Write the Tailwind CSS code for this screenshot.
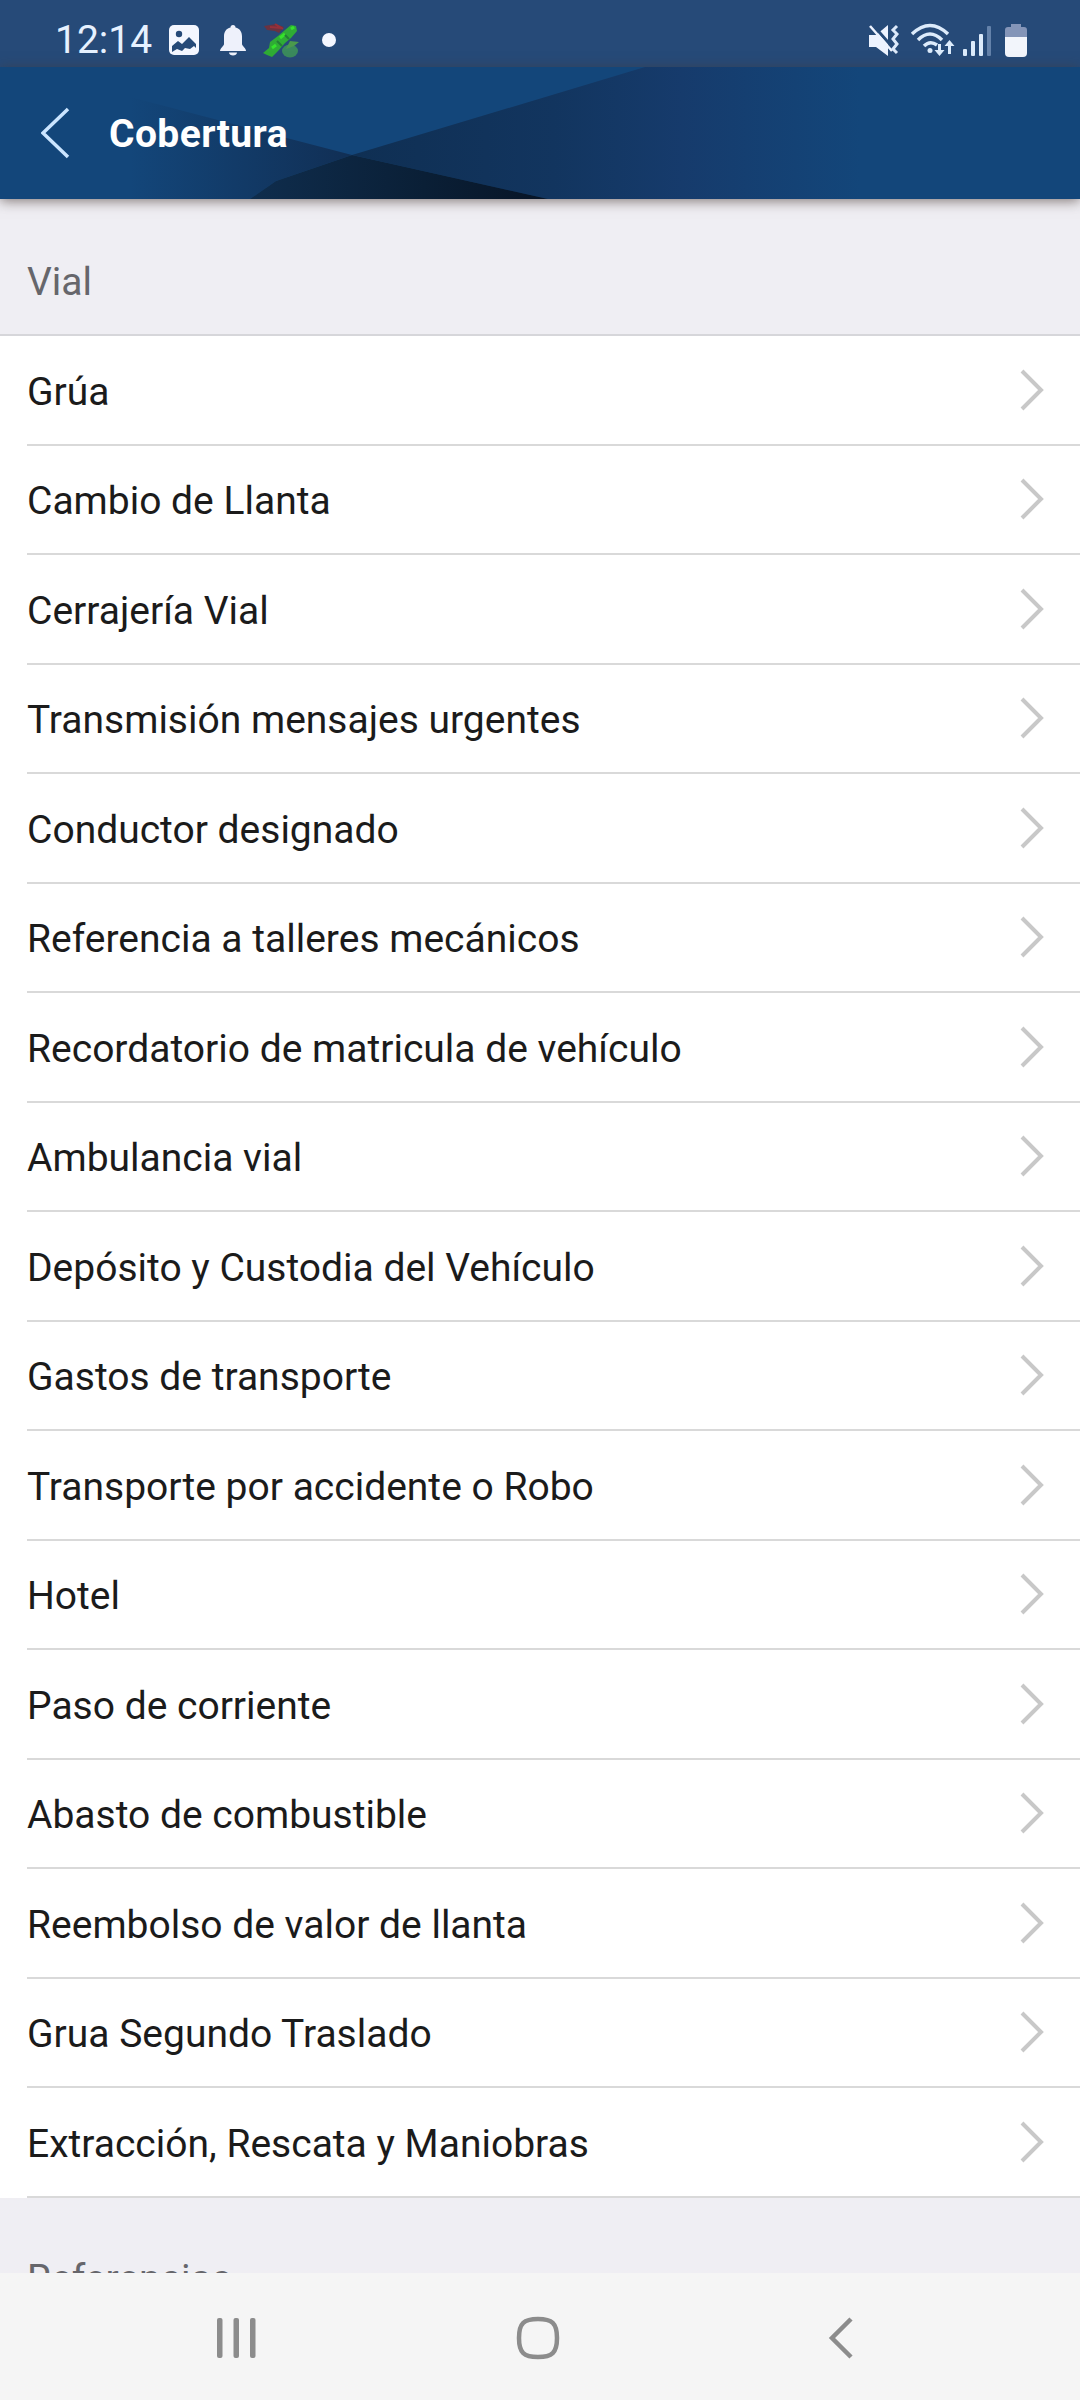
<!DOCTYPE html>
<html lang="es">
<head>
  <meta charset="UTF-8" />
  <meta name="viewport" content="width=device-width, initial-scale=1.0"/>
  <title>Cobertura</title>
  <script src="https://cdn.jsdelivr.net/npm/@tailwindcss/browser@4"></script>
</head>
<body class="bg-[#efeef3] font-['Roboto','Liberation_Sans',sans-serif]">
  <div class="w-[1080px] h-[2400px] flex flex-col overflow-hidden">

    <!-- Status bar -->
    <div class="h-[67px] shrink-0 bg-[#264a78] flex items-center justify-between pl-[55px] pr-[53px] pt-3 text-[#e6f1ff]">
      <div class="flex items-center">
        <span id="clock" class="text-[39px] leading-none w-[98px] pt-0.5 whitespace-nowrap">12:14</span>
        <svg class="ml-[15px]" width="32" height="32" viewBox="0 0 32 32">
          <rect x="1" y="1" width="30" height="30" rx="5" fill="#f4f7ff"/>
          <circle cx="11" cy="10" r="3.2" fill="#264a78"/>
          <path d="M4 22l6-5 4 3 7-7 7 7v4l-2-2-4 3-5-1-3 3-5-2-5 3z" fill="#264a78"/>
        </svg>
        <svg class="ml-[19px]" width="28" height="32" viewBox="0 0 28 32" fill="#eef1fb">
          <path d="M14 1c1.600 0 2.500 1 2.500 2.500C21 4.500 23 8 23 12.500V20c0 2 4 4 4 7H1c0-3 4-5 4-7v-7.500C5 8 7 4.500 11.500 3.500 11.500 2 12.400 1 14 1z"/>
          <path d="M10 28.500h8c0 2-2 3-4 3s-4-1-4-3z"/>
        </svg>
        <svg class="ml-[14px]" width="40" height="38" viewBox="0 0 40 38">
          <path d="M3 5l12-2 8 3-5 6-4-2-8-1z" fill="#6b3240"/>
          <path d="M9 6l12 1M14 3l8 5" stroke="#96303a" stroke-width="2"/>
          <ellipse cx="29" cy="30" rx="8" ry="6.500" fill="#3b8a5d"/>
          <path d="M30 4l5 1 1 5-6 7-6 5-7 8-6 6-5-2-4-2 6-5 1-6 8-6 7-6z" fill="#2fac35"/>
          <path d="M29 20l9 1-5 4-8 3z" fill="#4b9a4c"/>
          <path d="M11 27l4-3M19 17l5-4M30 8l3-2" stroke="#35e32c" stroke-width="3"/>
          <path d="M16 20l5 5M24 14l4 4" stroke="#237f35" stroke-width="2"/>
        </svg>
        <span class="ml-[21px] size-[14px] rounded-full bg-[#f4f7ff]"></span>
      </div>
      <div class="flex items-center">
        <!-- vibrate / muted -->
        <svg width="32" height="34" viewBox="0 0 32 34">
          <path d="M1 12h7L20 2v31L8 24H1z" fill="#edf3ff"/>
          <path d="M4 1l22 25" stroke="#264a78" stroke-width="3"/>
          <path d="M2 3l22 25" stroke="#edf3ff" stroke-width="2.500"/>
          <path d="M29 3l-4 4 4 4-4 5 4 5-4 5 4 4" fill="none" stroke="#dce9fa" stroke-width="3"/>
        </svg>
        <!-- wifi -->
        <svg class="ml-[10px]" width="46" height="34" viewBox="0 0 46 34" fill="none" stroke="#dcebfb" stroke-width="3.500">
          <path d="M2 11Q20-6 38 11M8 17Q20 5 32 17M14 23Q20 17 27 22"/>
          <circle cx="20" cy="27.500" r="2.500" fill="#dcebfb" stroke="none"/>
          <path d="M29.500 21v7M39.500 31v-9" stroke-width="3"/>
          <path d="M24.500 27h10l-5 6zM34.500 23h10l-5-6z" fill="#dcebfb" stroke="none"/>
        </svg>
        <!-- signal -->
        <svg class="ml-[6px]" width="30" height="34" viewBox="0 0 30 34" fill="#dcebfb">
          <rect x="1" y="26" width="4" height="7" rx="1"/>
          <rect x="9" y="18" width="4" height="15" rx="1"/>
          <rect x="17" y="11" width="4" height="22" rx="1"/>
          <rect x="25" y="3" width="4" height="30" rx="1" fill="#6482aa"/>
        </svg>
        <!-- battery -->
        <svg class="ml-[13px]" width="22" height="34" viewBox="0 0 22 34">
          <path d="M6 1h10v3h3q3 0 3 3v7H0V7q0-3 3-3h3z" fill="#8495b8"/>
          <path d="M0 14h22v16q0 4-4 4H4q-4 0-4-4z" fill="#f2f5fb"/>
        </svg>
      </div>
    </div>

    <!-- Header -->
    <header class="relative h-[132px] shrink-0 bg-[#13467a] shadow-[0_2px_12px_rgba(70,55,50,0.65)]">
      <svg class="absolute inset-0" width="1080" height="132" viewBox="0 0 1080 132">
        <defs>
          <linearGradient id="band" gradientUnits="userSpaceOnUse" x1="350" y1="0" x2="860" y2="0">
            <stop offset="0" stop-color="#0f2f53"/>
            <stop offset=".4" stop-color="#12355f"/>
            <stop offset=".65" stop-color="#163b6c"/>
            <stop offset="1" stop-color="#13467a"/>
          </linearGradient>
          <linearGradient id="wing" gradientUnits="userSpaceOnUse" x1="130" y1="0" x2="350" y2="0">
            <stop offset="0" stop-color="#13467a"/>
            <stop offset="1" stop-color="#112f55"/>
          </linearGradient>
          <linearGradient id="cross" gradientUnits="userSpaceOnUse" x1="250" y1="0" x2="540" y2="0">
            <stop offset="0" stop-color="#0f2d4d"/>
            <stop offset=".6" stop-color="#0a1f36"/>
            <stop offset="1" stop-color="#081527"/>
          </linearGradient>
        </defs>
        <path d="M645 0H860V132H548L352 88Z" fill="url(#band)"/>
        <path d="M130 30L352 88 276 114 250 132H130Z" fill="url(#wing)"/>
        <path d="M352 88L548 132H250L276 114Z" fill="url(#cross)"/>
      </svg>
      <div class="relative h-full flex items-center pl-[41px]">
        <svg width="29" height="52" viewBox="0 0 29 52" fill="none" stroke="#cbe5ff" stroke-width="3.500">
          <path d="M27 2L2 26l25 24"/>
        </svg>
        <h1 id="title" class="ml-[39px] pt-0.5 text-[39px] leading-none tracking-[0.4px] font-bold text-white">Cobertura</h1>
      </div>
    </header>

    <!-- Coverage list -->
    <main class="flex-1 min-h-0 overflow-hidden text-[39px] leading-[46px]">
      <h2 class="h-[137px] pt-[60px] pl-[27px] text-[#66666b] border-b-2 border-[#d6d6da]"><span>Vial</span></h2>
      <ul id="list" class="bg-white text-[#1b1b1b]"></ul>
      <h2 class="pt-[58px] pl-[27px] text-[#66666b]">Referencias</h2>
    </main>

    <!-- Navigation bar -->
    <nav class="h-[127px] shrink-0 bg-[#f5f5f5] flex items-center pl-[216px] pt-0.5">
      <svg width="41" height="42" viewBox="0 0 41 42" fill="#8c8c8c">
        <rect x="1" y="1" width="5.500" height="40" rx="2"/>
        <rect x="17.500" y="1" width="5.500" height="40" rx="2"/>
        <rect x="34" y="1" width="5.500" height="40" rx="2"/>
      </svg>
      <svg class="ml-[258px]" width="46" height="46" viewBox="0 0 46 46" fill="none" stroke="#8c8c8c" stroke-width="4.500">
        <path d="M23 4C37 4 42 8 42 23S37 42 23 42 4 38 4 23 9 4 23 4z"/>
      </svg>
      <svg class="ml-[267px]" width="26" height="42" viewBox="0 0 26 42" fill="none" stroke="#8c8c8c" stroke-width="4.500">
        <path d="M23 2L4 21l19 19"/>
      </svg>
    </nav>
  </div>

  <script>
    const items = [
      "Grúa",
      "Cambio de Llanta",
      "Cerrajería Vial",
      "Transmisión mensajes urgentes",
      "Conductor designado",
      "Referencia a talleres mecánicos",
      "Recordatorio de matricula de vehículo",
      "Ambulancia vial",
      "Depósito y Custodia del Vehículo",
      "Gastos de transporte",
      "Transporte por accidente o Robo",
      "Hotel",
      "Paso de corriente",
      "Abasto de combustible",
      "Reembolso de valor de llanta",
      "Grua Segundo Traslado",
      "Extracción, Rescata y Maniobras"
    ];

    document.getElementById("list").innerHTML = items.map(item => `
      <li class="pl-[27px]">
        <div class="h-[109.5px] flex items-center justify-between pr-[36px] border-b-2 border-[#d9d9d9]">
          <span class="pt-1">${item}</span>
          <svg width="24" height="42" viewBox="0 0 24 42" fill="none" stroke="#c8c8c8" stroke-width="4">
            <path d="M2 2l19 19L2 40"/>
          </svg>
        </div>
      </li>`).join("");
  </script>
</body>
</html>
